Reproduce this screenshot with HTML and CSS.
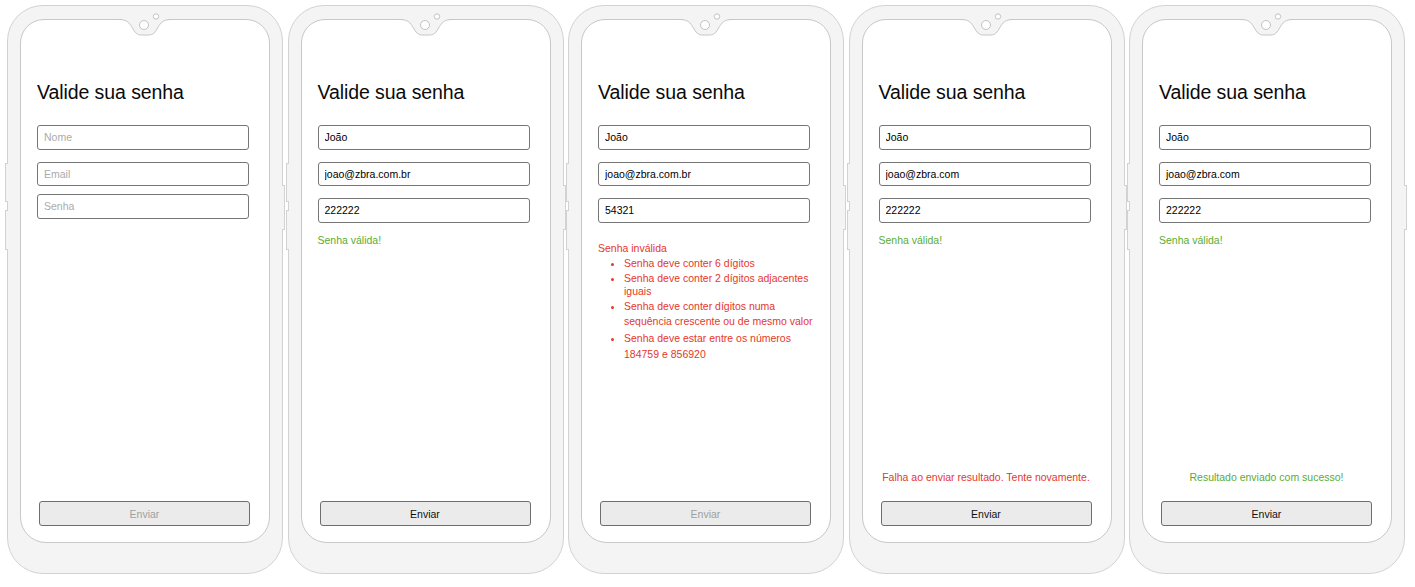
FILE: index.html
```html
<!DOCTYPE html>
<html lang="pt-BR">
<head>
<meta charset="utf-8">
<title>Valide sua senha</title>
<link rel="stylesheet" href="styles.css">
</head>
<body>
<div class="row">

  <div class="phone">
    <span class="side vol-up"></span><span class="side vol-down"></span><span class="side power"></span>
    <svg class="notch" width="60" height="34" viewBox="0 0 60 34"><path class="notch-fill" d="M3,13.5 C12,13.5 14,16 18,23 C21,28 23,29 27,29 L33,29 C37,29 39,28 42,23 C46,16 48,13.5 57,13.5 L57,12 L3,12 Z"/><path class="notch-line" d="M3,13.5 C12,13.5 14,16 18,23 C21,28 23,29 27,29 L33,29 C37,29 39,28 42,23 C46,16 48,13.5 57,13.5"/><circle class="cam" cx="29" cy="19" r="4.5"/><circle class="cam" cx="41" cy="10.5" r="2.7"/></svg>
    <div class="screen">
      <h1 class="title">Valide sua senha</h1>
      <div class="fields fields-tight">
        <input class="field" type="text" placeholder="Nome">
        <input class="field" type="text" placeholder="Email">
        <input class="field field-close" type="text" placeholder="Senha">
      </div>
      <div class="bottom">
        <button class="send" disabled>Enviar</button>
      </div>
    </div>
  </div>

  <div class="phone">
    <span class="side vol-up"></span><span class="side vol-down"></span><span class="side power"></span>
    <svg class="notch" width="60" height="34" viewBox="0 0 60 34"><path class="notch-fill" d="M3,13.5 C12,13.5 14,16 18,23 C21,28 23,29 27,29 L33,29 C37,29 39,28 42,23 C46,16 48,13.5 57,13.5 L57,12 L3,12 Z"/><path class="notch-line" d="M3,13.5 C12,13.5 14,16 18,23 C21,28 23,29 27,29 L33,29 C37,29 39,28 42,23 C46,16 48,13.5 57,13.5"/><circle class="cam" cx="29" cy="19" r="4.5"/><circle class="cam" cx="41" cy="10.5" r="2.7"/></svg>
    <div class="screen">
      <h1 class="title">Valide sua senha</h1>
      <div class="fields">
        <input class="field" type="text" value="João">
        <input class="field" type="text" value="joao@zbra.com.br">
        <input class="field" type="text" value="222222">
      </div>
      <p class="valid">Senha válida!</p>
      <div class="bottom">
        <button class="send">Enviar</button>
      </div>
    </div>
  </div>

  <div class="phone">
    <span class="side vol-up"></span><span class="side vol-down"></span><span class="side power"></span>
    <svg class="notch" width="60" height="34" viewBox="0 0 60 34"><path class="notch-fill" d="M3,13.5 C12,13.5 14,16 18,23 C21,28 23,29 27,29 L33,29 C37,29 39,28 42,23 C46,16 48,13.5 57,13.5 L57,12 L3,12 Z"/><path class="notch-line" d="M3,13.5 C12,13.5 14,16 18,23 C21,28 23,29 27,29 L33,29 C37,29 39,28 42,23 C46,16 48,13.5 57,13.5"/><circle class="cam" cx="29" cy="19" r="4.5"/><circle class="cam" cx="41" cy="10.5" r="2.7"/></svg>
    <div class="screen">
      <h1 class="title">Valide sua senha</h1>
      <div class="fields">
        <input class="field" type="text" value="João">
        <input class="field" type="text" value="joao@zbra.com.br">
        <input class="field" type="text" value="54321">
      </div>
      <div class="errors">
        <p class="errors-head">Senha inválida</p>
        <ul class="errors-list">
          <li class="err err-1">Senha deve conter 6 dígitos</li>
          <li class="err err-2">Senha deve conter 2 dígitos adjacentes iguais</li>
          <li class="err err-3">Senha deve conter dígitos numa sequência crescente ou de mesmo valor</li>
          <li class="err err-4">Senha deve estar entre os números 184759 e 856920</li>
        </ul>
      </div>
      <div class="bottom">
        <button class="send" disabled>Enviar</button>
      </div>
    </div>
  </div>

  <div class="phone">
    <span class="side vol-up"></span><span class="side vol-down"></span><span class="side power"></span>
    <svg class="notch" width="60" height="34" viewBox="0 0 60 34"><path class="notch-fill" d="M3,13.5 C12,13.5 14,16 18,23 C21,28 23,29 27,29 L33,29 C37,29 39,28 42,23 C46,16 48,13.5 57,13.5 L57,12 L3,12 Z"/><path class="notch-line" d="M3,13.5 C12,13.5 14,16 18,23 C21,28 23,29 27,29 L33,29 C37,29 39,28 42,23 C46,16 48,13.5 57,13.5"/><circle class="cam" cx="29" cy="19" r="4.5"/><circle class="cam" cx="41" cy="10.5" r="2.7"/></svg>
    <div class="screen">
      <h1 class="title">Valide sua senha</h1>
      <div class="fields">
        <input class="field" type="text" value="João">
        <input class="field" type="text" value="joao@zbra.com">
        <input class="field" type="text" value="222222">
      </div>
      <p class="valid">Senha válida!</p>
      <div class="bottom">
        <p class="result result-fail">Falha ao enviar resultado. Tente novamente.</p>
        <button class="send">Enviar</button>
      </div>
    </div>
  </div>

  <div class="phone">
    <span class="side vol-up"></span><span class="side vol-down"></span><span class="side power"></span>
    <svg class="notch" width="60" height="34" viewBox="0 0 60 34"><path class="notch-fill" d="M3,13.5 C12,13.5 14,16 18,23 C21,28 23,29 27,29 L33,29 C37,29 39,28 42,23 C46,16 48,13.5 57,13.5 L57,12 L3,12 Z"/><path class="notch-line" d="M3,13.5 C12,13.5 14,16 18,23 C21,28 23,29 27,29 L33,29 C37,29 39,28 42,23 C46,16 48,13.5 57,13.5"/><circle class="cam" cx="29" cy="19" r="4.5"/><circle class="cam" cx="41" cy="10.5" r="2.7"/></svg>
    <div class="screen">
      <h1 class="title">Valide sua senha</h1>
      <div class="fields">
        <input class="field" type="text" value="João">
        <input class="field" type="text" value="joao@zbra.com">
        <input class="field" type="text" value="222222">
      </div>
      <p class="valid">Senha válida!</p>
      <div class="bottom">
        <p class="result result-ok">Resultado enviado com sucesso!</p>
        <button class="send">Enviar</button>
      </div>
    </div>
  </div>

</div>
</body>
</html>
```

FILE: styles.css
```css
* { box-sizing: border-box; }

html, body {
  margin: 0;
  padding: 0;
  background: #ffffff;
}

body {
  font-family: "Liberation Sans", Arial, sans-serif;
  color: #000;
}

.row {
  display: flex;
  gap: 4.5px;
  padding: 5px 0 0 7px;
}

.phone {
  position: relative;
  flex: 0 0 276px;
  width: 276px;
  height: 569px;
  background: #f4f4f4;
  border: 1px solid #d2d2d2;
  border-radius: 36px;
  padding: 13px 12px 30px 12px;
  display: flex;
}

.side {
  position: absolute;
  width: 3px;
  background: #f4f4f4;
  border: 1px solid #d2d2d2;
}
.vol-up { left: -3px; top: 157px; height: 39px; border-right: none; }
.vol-down { left: -3px; top: 204px; height: 40px; border-right: none; }
.power { right: -3px; top: 179px; height: 45px; border-left: none; }

.notch {
  position: absolute;
  left: 107px;
  top: 0;
  z-index: 2;
  overflow: visible;
}
.notch-fill { fill: #f4f4f4; stroke: none; }
.notch-line { fill: none; stroke: #c6c6c6; stroke-width: 1; }
.cam { fill: #ffffff; stroke: #c2c2c2; stroke-width: 1; }

.screen {
  flex: 1;
  background: #ffffff;
  border: 1px solid #c8c8c8;
  border-radius: 24px 24px 26px 26px;
  padding: 0 0 16px 16px;
  display: flex;
  flex-direction: column;
}

.title {
  margin: 60px 0 21px 0;
  font-size: 19.5px;
  line-height: 24px;
  font-weight: normal;
  letter-spacing: -0.08px;
  color: #0a0a0a;
}

.fields {
  display: flex;
  flex-direction: column;
  gap: 12px;
}

.field {
  width: 212px;
  height: 24.5px;
  margin: 0;
  padding: 0 6px;
  border: 1px solid #767676;
  border-radius: 3px;
  background: #fff;
  font-family: "Liberation Sans", Arial, sans-serif;
  font-size: 10.5px;
  color: #000;
  outline: none;
}
.field::placeholder { color: #aaaaaa; }
.fields-tight .field-close { margin-top: -4px; }

.valid {
  margin: 10.5px 0 0 0;
  font-size: 10.5px;
  line-height: 14px;
  color: #5aac32;
}

.errors {
  width: 224px;
  margin-top: 18px;
  color: #e5372b;
  font-size: 10.5px;
}
.errors-head {
  margin: 0;
  line-height: 15px;
}
.errors-list {
  margin: 0;
  padding: 0 0 0 26px;
}
.err { line-height: 15px; }
.err-2 { line-height: 13px; margin-top: 1px; }
.err-3 { line-height: 15.5px; margin-top: 1px; }
.err-4 { line-height: 16px; margin-top: 0; }

.bottom {
  margin-top: auto;
  display: flex;
  flex-direction: column;
}

.result {
  margin: 0 0 17px 2px;
  width: 211px;
  text-align: center;
  font-size: 10.5px;
  line-height: 14px;
}
.result-fail { color: #e5372b; }
.result-ok { color: #5aac32; }

.send {
  width: 211px;
  height: 25px;
  margin: 0 0 0 2px;
  padding: 0;
  background: #ebebeb;
  border: 1px solid #6e6e6e;
  border-radius: 3px;
  font-family: "Liberation Sans", Arial, sans-serif;
  font-size: 10.5px;
  color: #111;
}
.send:disabled { color: #a0a0a0; }
```
